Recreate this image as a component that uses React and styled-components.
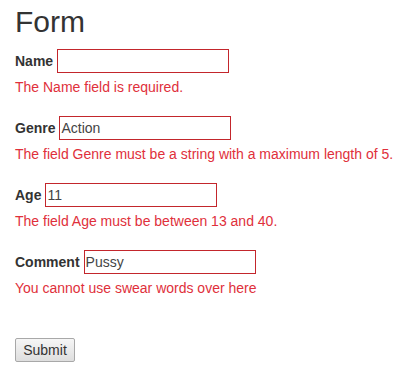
import React from 'react';
import styled, { createGlobalStyle } from 'styled-components';

const GlobalStyle = createGlobalStyle`
  body {
    margin: 0;
    background: #ffffff;
    font-family: "Liberation Sans", Arial, sans-serif;
    font-size: 14px;
    color: #333333;
  }
`;

const Page = styled.div`
  padding: 2px 15px 0;
`;

const Title = styled.h2`
  font-size: 30px;
  font-weight: normal;
  margin: 0 0 7px;
  line-height: 40px;
  color: #333333;
`;

const Field = styled.div`
  margin-bottom: 20px;
`;

const Row = styled.div`
  display: flex;
  align-items: center;
  gap: 4px;
  height: 24px;
`;

const Label = styled.label`
  font-weight: bold;
  font-size: 14px;
  color: #333333;
`;

const Input = styled.input`
  box-sizing: border-box;
  width: 172px;
  height: 24px;
  padding: 0 1px;
  border: 1px solid #c3262c;
  font-family: "Liberation Sans", Arial, sans-serif;
  font-size: 14px;
  color: #444444;
  background: #ffffff;
  outline: none;
`;

const Error = styled.div`
  margin-top: 5px;
  color: #e0303b;
  font-size: 14px;
  line-height: 18px;
`;

const Submit = styled.button`
  display: block;
  margin-top: 41px;
  height: 24px;
  width: 60px;
  padding: 0;
  font-family: "Liberation Sans", Arial, sans-serif;
  font-size: 14px;
  color: #333333;
  border: 1px solid #a8a8a8;
  border-radius: 2px;
  background: linear-gradient(#f6f6f6, #dedede);
`;

const fields = [
  { label: 'Name', value: '', error: 'The Name field is required.' },
  { label: 'Genre', value: 'Action', error: 'The field Genre must be a string with a maximum length of 5.' },
  { label: 'Age', value: '11', error: 'The field Age must be between 13 and 40.' },
  { label: 'Comment', value: 'Pussy', error: 'You cannot use swear words over here' },
];

export default function App() {
  return (
    <Page>
      <GlobalStyle />
      <Title>Form</Title>
      {fields.map((f) => (
        <Field key={f.label}>
          <Row>
            <Label>{f.label}</Label>
            <Input defaultValue={f.value} />
          </Row>
          <Error>{f.error}</Error>
        </Field>
      ))}
      <Submit>Submit</Submit>
    </Page>
  );
}
